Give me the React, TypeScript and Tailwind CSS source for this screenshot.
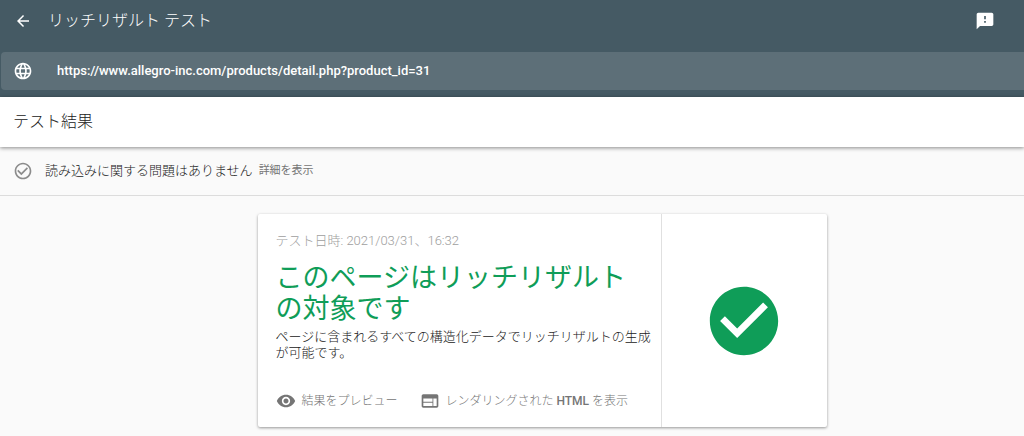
import type { ReactNode } from "react";

function Icon({ d, className }: { d: string; className: string }) {
  return (
    <svg viewBox="0 0 24 24" className={`shrink-0 fill-current ${className}`} aria-hidden="true">
      <path d={d} />
    </svg>
  );
}

const icons = {
  back: "M20 11H7.83l5.59-5.59L12 4l-8 8 8 8 1.41-1.41L7.83 13H20v-2z",
  feedback:
    "M20 2H4c-1.1 0-1.99.9-1.99 2L2 22l4-4h14c1.1 0 2-.9 2-2V4c0-1.1-.9-2-2-2zm-7 12h-2v-2h2v2zm0-4h-2V6h2v4z",
  globe:
    "M11.99 2C6.47 2 2 6.48 2 12s4.47 10 9.99 10C17.52 22 22 17.52 22 12S17.52 2 11.99 2zm6.93 6h-2.95c-.32-1.25-.78-2.45-1.38-3.56 1.84.63 3.37 1.91 4.33 3.56zM12 4.04c.83 1.2 1.48 2.53 1.91 3.96h-3.82c.43-1.43 1.08-2.76 1.91-3.96zM4.26 14C4.1 13.36 4 12.69 4 12s.1-1.36.26-2h3.38c-.08.66-.14 1.32-.14 2s.06 1.34.14 2H4.26zm.82 2h2.95c.32 1.25.78 2.45 1.38 3.56-1.84-.63-3.37-1.9-4.33-3.56zm2.95-8H5.08c.96-1.66 2.49-2.93 4.33-3.56C8.81 5.55 8.35 6.75 8.03 8zM12 19.96c-.83-1.2-1.48-2.53-1.91-3.96h3.82c-.43 1.43-1.08 2.76-1.91 3.96zM14.34 14H9.66c-.09-.66-.16-1.32-.16-2s.07-1.35.16-2h4.68c.09.65.16 1.32.16 2s-.07 1.34-.16 2zm.25 5.56c.6-1.11 1.06-2.31 1.38-3.56h2.95c-.96 1.65-2.49 2.93-4.33 3.56zM16.36 14c.08-.66.14-1.32.14-2s-.06-1.34-.14-2h3.38c.16.64.26 1.31.26 2s-.1 1.36-.26 2h-3.38z",
  checkOutline:
    "M16.59 7.58L10 14.17l-3.59-3.58L5 12l5 5 8-8zM12 2C6.48 2 2 6.48 2 12s4.48 10 10 10 10-4.48 10-10S17.52 2 12 2zm0 18c-4.42 0-8-3.58-8-8s3.58-8 8-8 8 3.58 8 8-3.58 8-8 8z",
  checkFilled:
    "M12 2C6.48 2 2 6.48 2 12s4.48 10 10 10 10-4.48 10-10S17.52 2 12 2zm-2 15l-5-5 1.41-1.41L10 14.17l7.59-7.59L19 8l-9 9z",
  eye: "M12 4.5C7 4.5 2.73 7.61 1 12c1.73 4.39 6 7.5 11 7.5s9.27-3.11 11-7.5c-1.73-4.39-6-7.5-11-7.5zM12 17c-2.76 0-5-2.24-5-5s2.24-5 5-5 5 2.24 5 5-2.24 5-5 5zm0-8c-1.66 0-3 1.34-3 3s1.34 3 3 3 3-1.34 3-3-1.34-3-3-3z",
  web: "M20 4H4c-1.1 0-1.99.9-1.99 2L2 18c0 1.1.9 2 2 2h16c1.1 0 2-.9 2-2V6c0-1.1-.9-2-2-2zm-5 14H4v-4h11v4zm0-5H4V9h11v4zm5 5h-4V9h4v9z",
};

function CardAction({ icon, children }: { icon: string; children: ReactNode }) {
  return (
    <button type="button" className="flex items-center gap-1.5 whitespace-nowrap text-xs text-[#757575]">
      <Icon d={icon} className="size-5" />
      <span>{children}</span>
    </button>
  );
}

export default function App() {
  return (
    <div className="min-h-screen bg-[#fafafa] font-['Roboto','Noto_Sans_CJK_JP',sans-serif] font-light text-[#212121]">
      <header className="bg-[#455a64] pb-[7px] text-white">
        <div className="flex h-[52px] items-center pr-[29px] pb-2.5 pl-3.5">
          <button type="button" aria-label="戻る">
            <Icon d={icons.back} className="size-[18px]" />
          </button>
          <h1 className="ml-4 text-base">リッチリザルト テスト</h1>
          <button type="button" aria-label="フィードバック" className="ml-auto">
            <Icon d={icons.feedback} className="size-5" />
          </button>
        </div>
        <div className="ml-px flex h-[38px] items-center gap-6 rounded-l-sm bg-[#5d6f78] pl-3">
          <Icon d={icons.globe} className="size-5" />
          <input
            type="url"
            aria-label="テストする URL"
            defaultValue="https://www.allegro-inc.com/products/detail.php?product_id=31"
            className="min-w-0 flex-1 bg-transparent text-[13px] font-medium outline-none"
          />
        </div>
      </header>

      <main>
        <div className="relative flex h-[50px] items-center bg-white px-[13px] shadow-[0_1px_4px_rgba(0,0,0,0.45)]">
          <h2 className="text-base">テスト結果</h2>
        </div>

        <div className="flex h-[49px] items-center border-b border-[#dcdcdc] px-[13px]">
          <Icon d={icons.checkOutline} className="size-5 text-[#8c8c8c]" />
          <p className="ml-3 text-[13px]">読み込みに関する問題はありません</p>
          <button type="button" className="ml-1.5 text-[11px] font-normal text-[#757575]">
            詳細を表示
          </button>
        </div>

        <div className="pt-[18px] pr-4 pb-4 pl-[76px]">
          <section className="mx-auto flex max-w-[569px] rounded-xs bg-white shadow-[0_1px_3px_rgba(0,0,0,0.4)]">
            <div className="min-w-0 flex-1 pt-[17px] pb-4 pl-[18px]">
              <p className="text-[13px] leading-5 text-[#9e9e9e]">テスト日時: 2021/03/31、16:32</p>
              <h3 className="mt-3 pr-4 text-[27px] leading-[31px] font-normal text-[#0f9d58]">
                このページはリッチリザルトの対象です
              </h3>
              <p className="mt-1 text-[13px] leading-4">
                ページに含まれるすべての構造化データでリッチリザルトの生成が可能です。
              </p>
              <div className="mt-[30px] flex gap-[22px]">
                <CardAction icon={icons.eye}>結果をプレビュー</CardAction>
                <CardAction icon={icons.web}>
                  レンダリングされた <span className="font-medium">HTML</span> を表示
                </CardAction>
              </div>
            </div>
            <div className="flex w-[166px] shrink-0 items-center justify-center border-l border-[#e0e0e0]">
              <Icon d={icons.checkFilled} className="size-[82px] text-[#0f9d58]" />
            </div>
          </section>
        </div>
      </main>
    </div>
  );
}
